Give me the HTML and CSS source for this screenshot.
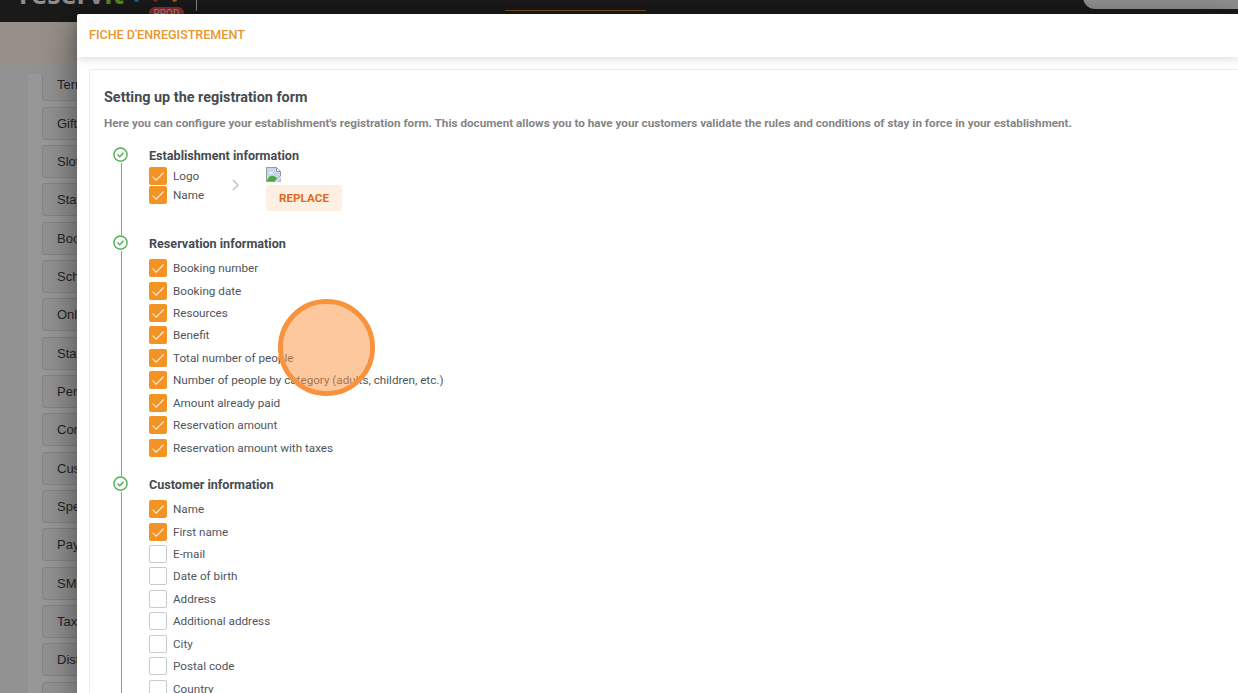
FILE: index.html
```html
<!DOCTYPE html>
<html lang="en">
<head>
    <meta charset="UTF-8">
    <meta name="viewport" content="width=device-width, initial-scale=1.0">
    <title>Fiche d'enregistrement</title>
    <link rel="stylesheet" href="styles.css">
</head>
<body>
    <svg class="sprite" width="0" height="0">
        <symbol id="tick" viewBox="0 0 18 18">
            <path d="M3.6 9.6l3.6 3.5 7.4-7.6" fill="none" stroke="#ffeeda" stroke-width="1.1"/>
        </symbol>
        <symbol id="done" viewBox="0 0 16 16">
            <circle cx="8.5" cy="7.600" r="6.6" fill="none" stroke="#4caf50" stroke-width="1.4"/>
            <path d="M5.500 7.600l2.200 2.200 3.900-4" fill="none" stroke="#4caf50" stroke-width="1.4"/>
        </symbol>
    </svg>

    <!-- page behind the dialog -->
    <div class="page">
        <div class="topbar">
            <div class="logo">reserv<span class="green">it</span><span class="drops"><i class="blue"></i><i class="red"></i><i class="orange"></i></span></div>
            <span class="env">PROD</span>
            <span class="separator"></span>
            <span class="tab"></span>
            <span class="search"></span>
        </div>
        <div class="banner"></div>
        <div class="menu">
            <div class="menu-item">Terms</div>
            <div class="menu-item">Gift</div>
            <div class="menu-item">Slots</div>
            <div class="menu-item">Stay</div>
            <div class="menu-item">Booking</div>
            <div class="menu-item">Schedule</div>
            <div class="menu-item">Online</div>
            <div class="menu-item">Statistics</div>
            <div class="menu-item">Periods</div>
            <div class="menu-item">Contact</div>
            <div class="menu-item">Customer</div>
            <div class="menu-item">Special</div>
            <div class="menu-item">Payment</div>
            <div class="menu-item">SMS</div>
            <div class="menu-item">Taxes</div>
            <div class="menu-item">Distribution</div>
            <div class="menu-item"></div>
        </div>
    </div>

    <div class="modal">
        <div class="modal-header">FICHE D'ENREGISTREMENT</div>
        <div class="modal-body">
            <div class="card">
                <h1>Setting up the registration form</h1>
                <p class="intro">Here you can configure your establishment's registration form. This document allows you to have your customers validate the rules and conditions of stay in force in your establishment.</p>

                <div class="step first">
                    <div class="rail"><svg class="done"><use href="#done"/></svg></div>
                    <div class="content">
                        <h2>Establishment information</h2>
                        <div class="logo-row">
                            <div class="list tight">
                                <div class="option"><span class="box on"><svg><use href="#tick"/></svg></span>Logo</div>
                                <div class="option"><span class="box on"><svg><use href="#tick"/></svg></span>Name</div>
                            </div>
                            <svg class="arrow" width="8" height="12" viewBox="0 0 8 12"><path d="M1 1l5 5-5 5" fill="none" stroke="#c4c4c4" stroke-width="1.5"/></svg>
                            <div class="upload">
                                <svg class="broken" width="16" height="16" viewBox="0 0 16 16">
                                    <path d="M.5.5h10l4 4v4.500L9 14.500H.5z" fill="#c5d6f3" stroke="#9a9a9a"/>
                                    <path d="M10.500.5v4h4z" fill="#fff" stroke="#9a9a9a"/>
                                    <path d="M3 6.500q.5-2 2-1.500 2 0 2 1.500z" fill="#fff"/>
                                    <path d="M1 14q2-6 6-5 3 0 4 2.500L8.500 14z" fill="#4ea63c"/>
                                    <path d="M11.500 14.500l3-3v3z" fill="#c5d6f3" stroke="#9a9a9a" stroke-width=".6"/>
                                </svg>
                                <button class="replace">REPLACE</button>
                            </div>
                        </div>
                    </div>
                </div>

                <div class="step second">
                    <div class="rail"><svg class="done"><use href="#done"/></svg></div>
                    <div class="content">
                        <h2>Reservation information</h2>
                        <div class="list">
                            <div class="option"><span class="box on"><svg><use href="#tick"/></svg></span>Booking number</div>
                            <div class="option"><span class="box on"><svg><use href="#tick"/></svg></span>Booking date</div>
                            <div class="option"><span class="box on"><svg><use href="#tick"/></svg></span>Resources</div>
                            <div class="option"><span class="box on"><svg><use href="#tick"/></svg></span>Benefit</div>
                            <div class="option"><span class="box on"><svg><use href="#tick"/></svg></span>Total number of people</div>
                            <div class="option"><span class="box on"><svg><use href="#tick"/></svg></span>Number of people by category (adults, children, etc.)</div>
                            <div class="option"><span class="box on"><svg><use href="#tick"/></svg></span>Amount already paid</div>
                            <div class="option"><span class="box on"><svg><use href="#tick"/></svg></span>Reservation amount</div>
                            <div class="option"><span class="box on"><svg><use href="#tick"/></svg></span>Reservation amount with taxes</div>
                        </div>
                    </div>
                </div>

                <div class="step third">
                    <div class="rail"><svg class="done"><use href="#done"/></svg></div>
                    <div class="content">
                        <h2>Customer information</h2>
                        <div class="list">
                            <div class="option"><span class="box on"><svg><use href="#tick"/></svg></span>Name</div>
                            <div class="option"><span class="box on"><svg><use href="#tick"/></svg></span>First name</div>
                            <div class="option"><span class="box"></span>E-mail</div>
                            <div class="option"><span class="box"></span>Date of birth</div>
                            <div class="option"><span class="box"></span>Address</div>
                            <div class="option"><span class="box"></span>Additional address</div>
                            <div class="option"><span class="box"></span>City</div>
                            <div class="option"><span class="box"></span>Postal code</div>
                            <div class="option"><span class="box"></span>Country</div>
                        </div>
                    </div>
                </div>
            </div>
        </div>
    </div>

    <div class="click-marker"></div>
</body>
</html>
```
FILE: styles.css
```css
* {
    box-sizing: border-box;
}
html {
    overflow: hidden;
}
body {
    margin: 0;
    height: 693px;
    overflow: hidden;
    position: relative;
    background-color: #929292;
    font-family: Roboto, sans-serif;
    color: #50555b;
}
.sprite {
    position: absolute;
}

/* page behind */
.page {
    height: 693px;
    overflow: hidden;
}
.topbar {
    position: relative;
    height: 22px;
    background-color: #1a1a1a;
    overflow: hidden;
}
.logo {
    position: absolute;
    left: 19px;
    top: -24px;
    font-family: "Open Sans", sans-serif;
    font-size: 27px;
    line-height: 36px;
    font-weight: 700;
    color: #8e8e8e;
}
.green {
    color: #5f8a1c;
}
.drops {
    position: absolute;
    left: 115px;
    top: 21px;
    display: flex;
    gap: 14px;
}
.drops i {
    width: 5px;
    height: 5px;
    border-radius: 50%;
}
.blue {
    background-color: #17697c;
}
.red {
    background-color: #84222c;
}
.orange {
    background-color: #94611a;
}
.env {
    position: absolute;
    left: 149px;
    top: 7px;
    width: 35px;
    height: 15px;
    border-radius: 6px;
    background-color: #8e2f30;
    color: #b28c8c;
    font-size: 10px;
    line-height: 13px;
    text-align: center;
}
.separator {
    position: absolute;
    left: 196px;
    top: 0;
    width: 1px;
    height: 11px;
    background-color: #8a8a8a;
}
.tab {
    position: absolute;
    left: 505px;
    top: 10px;
    width: 141px;
    height: 1px;
    background-color: #82582a;
}
.search {
    position: absolute;
    left: 1083px;
    top: -15px;
    width: 200px;
    height: 24px;
    border-radius: 12px;
    background-color: #929292;
}
.banner {
    height: 44px;
    background-color: #979089;
    border-bottom: 1px solid #a78e74;
}
.menu {
    margin: 8px 0 0 28px;
    padding-left: 14px;
    width: 300px;
    height: 619px;
    overflow: hidden;
    background-color: #989898;
    font-family: "Liberation Sans", sans-serif;
    font-size: 13px;
    color: #252525;
}
.menu-item {
    height: 33px;
    margin-bottom: 5.350px;
    padding-left: 14px;
    line-height: 32px;
    border: 1px solid #858585;
    border-radius: 3px;
    background-color: #929292;
}
.menu-item:first-child {
    margin-top: -5.800px;
}

/* dialog */
.modal {
    position: absolute;
    left: 77px;
    top: 14px;
    width: 1161px;
    height: 679px;
    background-color: #fff;
    border-top-left-radius: 2px;
    box-shadow: 0 8px 36px rgba(0, 0, 0, .5);
}
.modal-header {
    position: relative;
    height: 43px;
    padding-left: 12px;
    line-height: 42px;
    font-size: 12.550px;
    font-weight: 500;
    color: #e8962e;
    box-shadow: 0 2px 9px rgba(0, 0, 0, .14);
}
.modal-body {
    height: 636px;
    padding: 12px 0 0 12px;
    overflow: hidden;
}
.card {
    height: 660px;
    padding: 19px 14px;
    border: 1px solid #ececec;
    border-right: 0;
    border-radius: 3px 0 0 3px;
}
h1 {
    margin: 0;
    font-size: 14.400px;
    line-height: 18px;
    font-weight: 700;
    color: #454b50;
}
.intro {
    margin: 9px 0 16px;
    font-size: 11.700px;
    line-height: 15px;
    font-weight: 700;
    color: #858585;
    white-space: nowrap;
}
.step {
    display: flex;
    margin-left: 8px;
}
.first {
    height: 88px;
}
.second {
    height: 241px;
}
.third {
    height: 260px;
}
.rail {
    display: flex;
    flex-direction: column;
    width: 37px;
}
.rail::after {
    content: "";
    flex: 1;
    width: 1px;
    margin-left: 9px;
    background-color: #999;
}
.done {
    width: 16px;
    height: 16px;
    flex: none;
}
h2 {
    margin: 0;
    font-size: 12.600px;
    line-height: 18px;
    font-weight: 700;
    color: #454b50;
}
.list {
    padding-top: 3.900px;
}
.option {
    display: flex;
    align-items: center;
    gap: 6px;
    height: 22.460px;
    font-size: 11.700px;
}
.box {
    width: 18px;
    height: 18px;
    border: 1px solid #c9cacd;
    border-radius: 2px;
}
.box.on {
    border: 0;
    background-color: #f39325;
}
.box svg {
    display: block;
    width: 18px;
    height: 18px;
}
.logo-row {
    display: flex;
    margin-top: 2px;
}
.tight {
    width: 83px;
    margin-top: -1px;
    padding: 0;
}
.tight .option {
    height: 19px;
}
.arrow {
    margin-top: 12px;
}
.upload {
    margin-left: 26px;
}
.broken {
    display: block;
    margin-bottom: 2px;
}
.replace {
    display: block;
    width: 76px;
    height: 26px;
    padding: 0;
    border: 0;
    border-radius: 3px;
    background-color: #fdf0e3;
    font-family: Roboto, sans-serif;
    font-size: 11.700px;
    font-weight: 700;
    color: #dc6c1c;
}

/* pointer highlight */
.click-marker {
    position: absolute;
    left: 278px;
    top: 299px;
    width: 97px;
    height: 97px;
    border: 5px solid #f8923c;
    border-radius: 50%;
    background-color: rgba(251, 146, 60, .5);
    background-clip: padding-box;
}
```
